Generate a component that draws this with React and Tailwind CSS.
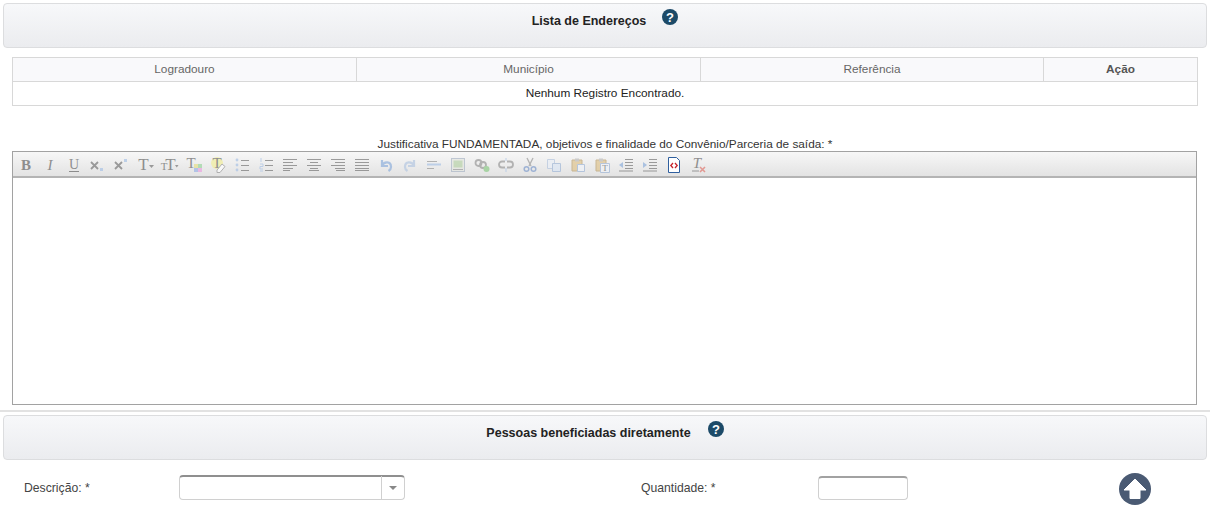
const FONT = "font-['Liberation_Sans','Noto_Sans',sans-serif]";

function HelpIcon() {
  return (
    <svg width="16" height="16" viewBox="0 0 16 16" className="shrink-0">
      <circle cx="8" cy="8" r="8" fill="#1c4a68" />
      <text x="8" y="12.5" textAnchor="middle" fontSize="13" fontWeight="700" fill="#fff" className="font-['Liberation_Sans']">?</text>
    </svg>
  );
}

function SectionHeader({ title, gap }) {
  return (
    <div className="mx-[3px] h-[45px] rounded-[4px] border border-[#dcdddf] bg-gradient-to-b from-[#f7f8fa] to-[#ebecef] flex justify-center">
      <div className="flex items-start pt-[6px]">
        <span className="text-[12.5px] leading-[22px] font-bold text-[#222]">{title}</span>
        <span className={gap}><HelpIcon /></span>
      </div>
    </div>
  );
}

const Lines = ({ rows, stroke = '#777' }) => (
  <>
    {rows.map(([x1, x2, y], i) => (
      <path key={i} d={`M${x1} ${y}H${x2}`} stroke={stroke} fill="none" />
    ))}
  </>
);

const Letter = ({ ch, x = 8, y = 13, size = 15, weight = 400, italic }) => (
  <text x={x} y={y} textAnchor="middle" fontSize={size} fontWeight={weight} fontStyle={italic ? 'italic' : 'normal'} fill="#666" className="font-['Liberation_Serif']">{ch}</text>
);

const toolbarIcons = [
  <Letter ch="B" weight={700} size={15} />,
  <Letter ch="I" italic size={15} />,
  <>
    <Letter ch="U" size={14} y={12} />
    <path d="M3 14.5H13" stroke="#666" />
  </>,
  <>
    <path d="M1 5l7 7M8 5l-7 7" stroke="#777" strokeWidth="1.8" />
    <path d="M10 11h3v3h-3z" fill="#a9c3e6" />
  </>,
  <>
    <path d="M1 5l7 7M8 5l-7 7" stroke="#777" strokeWidth="1.8" />
    <path d="M10 2h3v3h-3z" fill="#a9c3e6" />
  </>,
  <>
    <Letter ch="T" x={5.5} size={17} />
    <path d="M11 8h5l-2.5 3z" fill="#777" />
  </>,
  <>
    <Letter ch="T" x={2} size={11} />
    <Letter ch="T" x={8.5} size={17} />
    <path d="M13 8h3.5l-1.7 2.5z" fill="#777" />
  </>,
  <>
    <Letter ch="T" x={5} y={11} size={15} />
    <path d="M8 7h4v4H8z" fill="#e7e08c" />
    <path d="M12 7h4v4h-4z" fill="#9bd6a0" />
    <path d="M8 11h4v4H8z" fill="#9db4e6" />
    <path d="M12 11h4v4h-4z" fill="#eba4e0" />
  </>,
  <>
    <circle cx="7" cy="6" r="6" fill="#f1ee9c" />
    <Letter ch="T" x={7} y={11} size={15} />
    <path d="M7 13l5-6 3 2.5-5 6H7z" fill="#fff" stroke="#999" />
  </>,
  <>
    <circle cx="3" cy="3" r="1.4" fill="#a9c3e6" />
    <circle cx="3" cy="8" r="1.4" fill="#a9c3e6" />
    <circle cx="3" cy="13" r="1.4" fill="#a9c3e6" />
    <Lines rows={[[7, 15, 3.5], [7, 15, 8.5], [7, 15, 13.5]]} />
  </>,
  <>
    <path d="M3 1v4M2 7h3v2.5H2V12h3M2 14h3" stroke="#a9c3e6" fill="none" />
    <Lines rows={[[7, 15, 3.5], [7, 15, 8.5], [7, 15, 13.5]]} />
  </>,
  <Lines rows={[[1, 15, 2.5], [1, 11, 5.5], [1, 15, 8.5], [1, 11, 11.5], [1, 8, 13.5]]} />,
  <Lines rows={[[1, 15, 2.5], [4, 12, 5.5], [1, 15, 8.5], [4, 12, 11.5], [3, 13, 13.5]]} />,
  <Lines rows={[[1, 15, 2.5], [5, 15, 5.5], [1, 15, 8.5], [5, 15, 11.5], [6, 15, 13.5]]} />,
  <Lines rows={[[1, 15, 2.5], [1, 15, 5.5], [1, 15, 8.5], [1, 15, 11.5], [1, 15, 13.5]]} />,
  <path d="M4 3v6h6M4 9c2-5 9-5 9 1 0 2-1 3-2.5 4" stroke="#8fb0dc" strokeWidth="2.2" fill="none" />,
  <path d="M12 3v6H6M12 9c-2-5-9-5-9 1 0 2 1 3 2.5 4" stroke="#b5c8e2" strokeWidth="2.2" fill="none" />,
  <>
    <path d="M1 7.5H15" stroke="#a9c3e6" strokeWidth="2" />
    <path d="M1 4.5H11M1 11.5H8" stroke="#999" />
  </>,
  <>
    <rect x="1.5" y="1.5" width="13" height="13" fill="#e4e6e0" stroke="#aab6c6" />
    <rect x="3.5" y="3.5" width="9" height="7" fill="#b7d2a8" />
    <path d="M3 12.5h10" stroke="#999" />
  </>,
  <>
    <circle cx="4.5" cy="6" r="3" fill="none" stroke="#999" strokeWidth="1.8" />
    <circle cx="9" cy="8" r="3" fill="none" stroke="#999" strokeWidth="1.8" />
    <circle cx="12.5" cy="12" r="3" fill="#8dcb88" />
  </>,
  <>
    <path d="M7 4.5H4a3 3 0 000 6h3M9 4.5h3a3 3 0 010 6H9" fill="none" stroke="#999" strokeWidth="1.8" />
    <path d="M8 1v3M8 11v4" stroke="#a9c3e6" />
  </>,
  <>
    <path d="M5 1l4 8M11 1L7 9" stroke="#999" strokeWidth="1.3" />
    <circle cx="4.5" cy="12" r="2.3" fill="none" stroke="#7f9ccc" strokeWidth="1.5" />
    <circle cx="11.5" cy="12" r="2.3" fill="none" stroke="#7f9ccc" strokeWidth="1.5" />
  </>,
  <>
    <path d="M1.5 2.5h7v9h-7z" fill="#e9eef6" stroke="#b5c6de" />
    <path d="M6.5 6.5h8v8h-8z" fill="#dbe6f4" stroke="#9fb6d6" />
  </>,
  <>
    <path d="M2 3h10v11H2z" fill="#dfc48e" stroke="#b9a070" />
    <path d="M5 1.5h4v3H5z" fill="#bbb" />
    <path d="M7.5 7.5h7v7h-7z" fill="#f0f3f8" stroke="#9fb6d6" />
  </>,
  <>
    <path d="M2 3h10v11H2z" fill="#dfc48e" stroke="#b9a070" />
    <path d="M5 1.5h4v3H5z" fill="#bbb" />
    <path d="M6.5 6.5h9v9h-9z" fill="#f0f3f8" stroke="#9fb6d6" />
    <Letter ch="T" x={11} y={14} size={9} />
  </>,
  <>
    <Lines rows={[[7, 15, 2.5], [7, 15, 5.5], [7, 15, 8.5], [7, 15, 11.5], [1, 15, 14]]} />
    <path d="M5 5L1 8l4 3z" fill="#8fb0dc" />
  </>,
  <>
    <Lines rows={[[7, 15, 2.5], [7, 15, 5.5], [7, 15, 8.5], [7, 15, 11.5], [1, 15, 14]]} />
    <path d="M1 5l4 3-4 3z" fill="#8fb0dc" />
  </>,
  <>
    <path d="M2.5.5h8l3 3v12h-11z" fill="#fff" stroke="#2f5f9e" />
    <path d="M7 6L4.8 8.5 7 11M9 6l2.2 2.5L9 11" fill="none" stroke="#c8242c" strokeWidth="1.3" />
  </>,
  <>
    <Letter ch="T" x={7} y={11} size={15} italic />
    <path d="M2 14h7" stroke="#777" />
    <path d="M10 10l5 5M15 10l-5 5" stroke="#e0786f" strokeWidth="1.6" />
  </>,
];

const LIT_ICON = 27; // only the source button stays fully lit

function Toolbar() {
  return (
    <div className="h-[26px] pl-px pt-[2px] flex items-center border-b-2 border-[#b4b4b4] bg-gradient-to-b from-[#f7f7f7] to-[#e3e3e3]">
      {toolbarIcons.map((icon, i) => (
        <span key={i} className={`w-6 flex justify-center ${i === LIT_ICON ? '' : 'opacity-70'}`}>
          <svg width="16" height="16" viewBox="0 0 16 16" className="overflow-visible">{icon}</svg>
        </span>
      ))}
    </div>
  );
}

export default function App() {
  return (
    <div className={`${FONT} w-[1210px] h-[514px] overflow-hidden bg-white pt-[3px] text-[11.8px] text-[#333]`}>
      <SectionHeader title="Lista de Endereços" gap="ml-[16px] -mt-px" />

      <table className="mt-[9px] ml-[12px] w-[1186px] table-fixed border-collapse">
        <thead>
          <tr className="h-[24px] bg-[#f9f9fb] text-[#666]">
            <th className="w-[344px] border border-[#d8d8d8] font-normal">Logradouro</th>
            <th className="w-[344px] border border-[#d8d8d8] font-normal">Município</th>
            <th className="w-[343px] border border-[#d8d8d8] font-normal">Referência</th>
            <th className="border border-[#d8d8d8] font-bold text-[#555]">Ação</th>
          </tr>
        </thead>
        <tbody>
          <tr className="h-[24px]">
            <td colSpan={4} className="border border-[#d8d8d8] text-center text-[#222]">Nenhum Registro Encontrado.</td>
          </tr>
        </tbody>
      </table>

      <div className="mt-[31px] h-[14px] leading-[14px] text-center text-[#333]">
        Justificativa FUNDAMENTADA, objetivos e finalidade do Convênio/Parceria de saída: *
      </div>

      <div className="ml-[12px] w-[1185px] h-[254px] border border-[#a2a2a2] bg-white">
        <Toolbar />
      </div>

      <div className="mt-[5px] h-[2px] bg-[#e2e2e2]" />
      <div className="mt-[3px]">
        <SectionHeader title="Pessoas beneficiadas diretamente" gap="ml-[17px] -mt-px" />
      </div>

      <div className="mt-[15px] pl-[24px] h-[25px] flex items-center text-[12.2px]">
        <label className="w-[155px] mt-[2px] text-[#444]">Descrição: *</label>
        <div className="w-[226px] h-[25px] flex rounded-[4px] border border-[#d0d0d0] border-t-2 border-t-[#8f8f8f] bg-white">
          <div className="flex-1" />
          <div className="w-[23px] -mt-px flex items-center justify-center border-l border-[#d0d0d0]">
            <span className="w-0 h-0 border-x-[4px] border-x-transparent border-t-[4px] border-t-[#888]" />
          </div>
        </div>
        <label className="ml-[236px] w-[177px] mt-[2px] text-[#444]">Quantidade: *</label>
        <input className="w-[90px] h-[24px] rounded-[4px] border border-[#d0d0d0] border-t-2 border-t-[#a2a2a2] bg-white outline-none" />
        <span className="ml-[211px] w-[32px] h-[32px] mt-[3px] rounded-full bg-[#4a5a73] flex items-center justify-center">
          <svg width="24" height="24" viewBox="0 0 24 24">
            <path d="M12 2L23 13h-6v8.5H7V13H1z" fill="#fff" stroke="#fff" strokeWidth="1" strokeLinejoin="round" />
          </svg>
        </span>
      </div>
    </div>
  );
}
